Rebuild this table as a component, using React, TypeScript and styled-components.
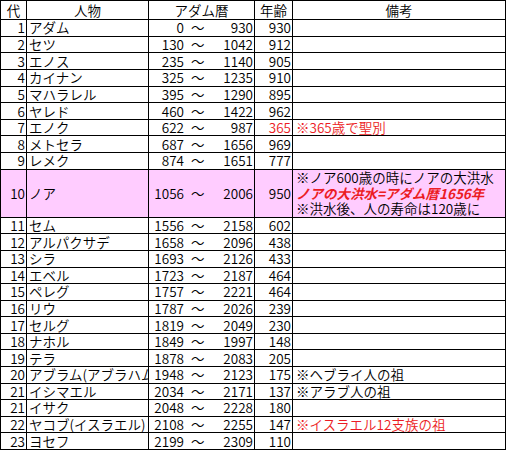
import React from "react";
import styled, { createGlobalStyle } from "styled-components";

const Global = createGlobalStyle`
  html, body { margin: 0; padding: 0; background: #fff; }
  body { font-family: "Noto Sans CJK JP", "Noto Sans", sans-serif; }
`;

type Row = {
  no: string;
  name: string;
  start: string;
  end: string;
  age: string;
  ageRed?: boolean;
  note?: React.ReactNode;
  noteRed?: boolean;
  tall?: boolean;
};

const RED = "#ec1c24";

const Sheet = styled.div`
  display: grid;
  grid-template-columns: 25px 121px 105px 37px 212px;
  grid-template-rows: 18px repeat(9, 15.65px) 47.15px repeat(14, 15.57px);
  gap: 1px;
  padding: 1px;
  background: #000;
  width: fit-content;
  font-family: "Noto Sans CJK JP", "Noto Sans", sans-serif;
  font-size: 13.5px;
  font-weight: 350;
  color: #000;
`;

const Cell = styled.div<{ $pink?: boolean }>`
  background: ${(p) => (p.$pink ? "#ffccff" : "#fff")};
  display: flex;
  align-items: center;
  white-space: nowrap;
  line-height: 15px;
`;

const HeadCell = styled(Cell)`
  justify-content: center;
`;

const NumCell = styled(Cell)`
  justify-content: flex-end;
  padding-right: 1px;
`;

const NameCell = styled(Cell)`
  padding-left: 2px;
  overflow-x: clip;
  overflow-y: visible;
`;

const SpanCell = styled(Cell)`
  display: grid;
  grid-template-columns: 35px 24px 1fr;
  align-items: center;
  padding-right: 1px;
`;

const Start = styled.span`
  text-align: right;
`;

const Tilde = styled.span`
  text-align: left;
  padding-left: 7px;
`;

const End = styled.span`
  text-align: right;
`;

const AgeCell = styled(Cell)<{ $red?: boolean }>`
  justify-content: flex-end;
  padding-right: 1px;
  color: ${(p) => (p.$red ? RED : "#000")};
`;

const NoteCell = styled(Cell)<{ $red?: boolean }>`
  padding-left: 3px;
  color: ${(p) => (p.$red ? RED : "#000")};
`;

const NoteStack = styled.div`
  display: flex;
  flex-direction: column;
  line-height: 15.5px;
`;

const Emph = styled.span`
  color: ${RED};
  font-weight: 700;
  font-style: italic;
`;

const rows: Row[] = [
  { no: "1", name: "アダム", start: "0", end: "930", age: "930" },
  { no: "2", name: "セツ", start: "130", end: "1042", age: "912" },
  { no: "3", name: "エノス", start: "235", end: "1140", age: "905" },
  { no: "4", name: "カイナン", start: "325", end: "1235", age: "910" },
  { no: "5", name: "マハラレル", start: "395", end: "1290", age: "895" },
  { no: "6", name: "ヤレド", start: "460", end: "1422", age: "962" },
  { no: "7", name: "エノク", start: "622", end: "987", age: "365", ageRed: true, note: "※365歳で聖別", noteRed: true },
  { no: "8", name: "メトセラ", start: "687", end: "1656", age: "969" },
  { no: "9", name: "レメク", start: "874", end: "1651", age: "777" },
  {
    no: "10",
    name: "ノア",
    start: "1056",
    end: "2006",
    age: "950",
    tall: true,
    note: (
      <NoteStack>
        <span>※ノア600歳の時にノアの大洪水</span>
        <Emph>ノアの大洪水=アダム暦1656年</Emph>
        <span>※洪水後、人の寿命は120歳に</span>
      </NoteStack>
    ),
  },
  { no: "11", name: "セム", start: "1556", end: "2158", age: "602" },
  { no: "12", name: "アルパクサデ", start: "1658", end: "2096", age: "438" },
  { no: "13", name: "シラ", start: "1693", end: "2126", age: "433" },
  { no: "14", name: "エベル", start: "1723", end: "2187", age: "464" },
  { no: "15", name: "ペレグ", start: "1757", end: "2221", age: "464" },
  { no: "16", name: "リウ", start: "1787", end: "2026", age: "239" },
  { no: "17", name: "セルグ", start: "1819", end: "2049", age: "230" },
  { no: "18", name: "ナホル", start: "1849", end: "1997", age: "148" },
  { no: "19", name: "テラ", start: "1878", end: "2083", age: "205" },
  { no: "20", name: "アブラム(アブラハム)", start: "1948", end: "2123", age: "175", note: "※ヘブライ人の祖" },
  { no: "21", name: "イシマエル", start: "2034", end: "2171", age: "137", note: "※アラブ人の祖" },
  { no: "21", name: "イサク", start: "2048", end: "2228", age: "180" },
  { no: "22", name: "ヤコブ(イスラエル)", start: "2108", end: "2255", age: "147", note: "※イスラエル12支族の祖", noteRed: true },
  { no: "23", name: "ヨセフ", start: "2199", end: "2309", age: "110" },
];

export default function App() {
  return (
    <>
      <Global />
      <Sheet>
        <HeadCell>代</HeadCell>
        <HeadCell>人物</HeadCell>
        <HeadCell>アダム暦</HeadCell>
        <HeadCell>年齢</HeadCell>
        <HeadCell>備考</HeadCell>
        {rows.map((r, i) => (
          <React.Fragment key={i}>
            <NumCell $pink={r.tall}>{r.no}</NumCell>
            <NameCell $pink={r.tall}>{r.name}</NameCell>
            <SpanCell $pink={r.tall}>
              <Start>{r.start}</Start>
              <Tilde>～</Tilde>
              <End>{r.end}</End>
            </SpanCell>
            <AgeCell $pink={r.tall} $red={r.ageRed}>
              {r.age}
            </AgeCell>
            <NoteCell $pink={r.tall} $red={r.noteRed}>
              {r.note}
            </NoteCell>
          </React.Fragment>
        ))}
      </Sheet>
    </>
  );
}
